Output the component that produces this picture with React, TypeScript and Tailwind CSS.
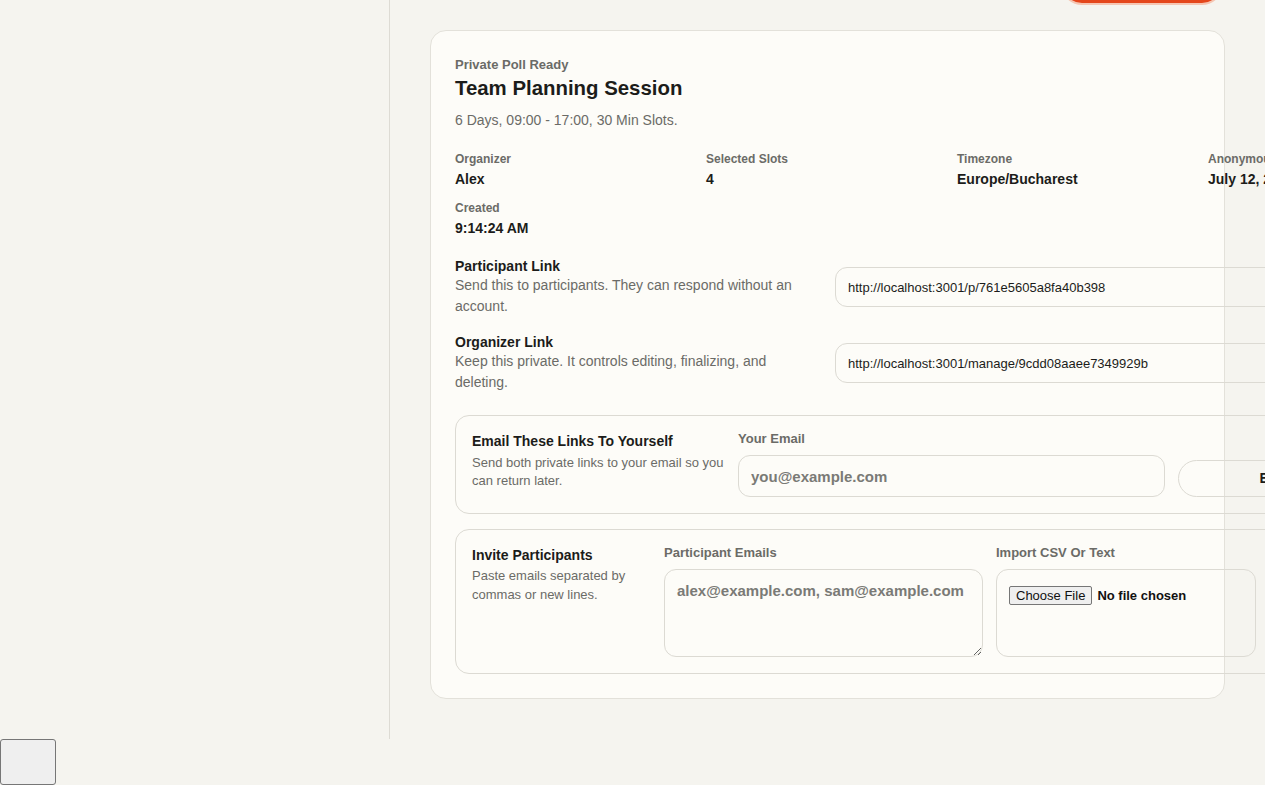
import React from "react";

const META = [
  { label: "Organizer", value: "Alex" },
  { label: "Selected Slots", value: "4" },
  { label: "Timezone", value: "Europe/Bucharest" },
  { label: "Anonymous Until", value: "July 12, 2025" },
  { label: "Created", value: "9:14:24 AM" },
];

const LINKS = [
  {
    title: "Participant Link",
    desc: "Send this to participants. They can respond without an account.",
    url: "http://localhost:3001/p/761e5605a8fa40b398",
  },
  {
    title: "Organizer Link",
    desc: "Keep this private. It controls editing, finalizing, and deleting.",
    url: "http://localhost:3001/manage/9cdd08aaee7349929b",
  },
];

export default function App() {
  return (
    <div
      className="w-full h-[785px] overflow-hidden bg-[#f5f4ef] text-[#1c1c1a]"
      style={{ fontFamily: '"Liberation Sans", Arial, sans-serif' }}
    >
      <div className="flex h-[739px]">
        {/* sidebar */}
        <aside className="w-[390px] shrink-0 border-r border-[#dddbd4]" />

        {/* main */}
        <main className="flex-1 pl-[40px]">
          <div className="w-[795px] flex justify-end pr-[2px]">
            <button className="w-[162px] h-[42px] -mt-[37px] rounded-full bg-[#e4461b] border-2 border-[#f5c6b3]" />
          </div>

          <section className="mt-[25px] w-[795px] h-[669px] rounded-2xl border border-[#e3e1da] bg-[#fdfcf8] px-6 pt-[26px]">
            <div className="w-[1004px]">
              <p className="text-[13px] leading-4 font-bold text-[#6b6b67]">Private Poll Ready</p>
              <h1 className="mt-[3px] text-[20.4px] leading-6 font-bold text-[#1c1c1a]">Team Planning Session</h1>
              <p className="mt-[12px] text-[14px] leading-4 text-[#6b6b67]">6 Days, 09:00 - 17:00, 30 Min Slots.</p>

              <div className="mt-[23px] grid grid-cols-[repeat(4,235px)] gap-x-4 gap-y-[11px]">
                {META.map((m) => (
                  <div key={m.label} className="whitespace-nowrap">
                    <div className="text-[12px] leading-4 font-bold text-[#6b6b67]">{m.label}</div>
                    <div className="mt-[2px] text-[14px] leading-5 font-bold text-[#1c1c1a]">{m.value}</div>
                  </div>
                ))}
              </div>

              <div className="mt-[19px] flex flex-col gap-4">
                {LINKS.map((l) => (
                  <div key={l.title} className="grid grid-cols-[352px_1fr] gap-7 items-center">
                    <div>
                      <div className="text-[14px] leading-[18px] font-bold text-[#1c1c1a]">{l.title}</div>
                      <div className="text-[14px] leading-[21px] text-[#6b6b67]">{l.desc}</div>
                    </div>
                    <input
                      readOnly
                      value={l.url}
                      className="h-[40px] w-full rounded-xl border border-[#dcdad3] px-3 text-[13px] text-[#1c1c1a] outline-none"
                    />
                  </div>
                ))}
              </div>

              {/* email yourself */}
              <div className="mt-[22px] rounded-[14px] border border-[#dcdad3] p-4 grid grid-cols-[253px_427px_1fr] gap-[13px] items-end">
                <div className="self-start">
                  <div className="text-[14px] leading-[18px] font-bold text-[#1c1c1a]">Email These Links To Yourself</div>
                  <div className="mt-[4px] text-[13px] leading-[18px] text-[#6b6b67]">
                    Send both private links to your email so you can return later.
                  </div>
                </div>
                <div>
                  <div className="text-[13px] leading-[14px] font-bold text-[#6b6b67]">Your Email</div>
                  <input
                    placeholder="you@example.com"
                    className="mt-[9px] h-[42px] w-full rounded-xl border border-[#dcdad3] px-3 text-[15px] font-bold text-[#1c1c1a] placeholder:text-[#7a7a76] outline-none"
                  />
                </div>
                <button className="h-[37px] w-full rounded-full border border-[#dcdad3] text-[14px] font-bold text-[#1c1c1a]">
                  Email Me Links
                </button>
              </div>

              {/* invite participants */}
              <div className="mt-[15px] rounded-[14px] border border-[#dcdad3] p-4 grid grid-cols-[179px_319px_260px_1fr] gap-[13px] items-end">
                <div className="self-start">
                  <div className="text-[14px] leading-[18px] font-bold text-[#1c1c1a]">Invite Participants</div>
                  <div className="mt-[2px] text-[13px] leading-[19px] text-[#6b6b67]">
                    Paste emails separated by commas or new lines.
                  </div>
                </div>
                <div>
                  <div className="text-[13px] leading-[14px] font-bold text-[#6b6b67]">Participant Emails</div>
                  <textarea
                    placeholder="alex@example.com, sam@example.com"
                    className="mt-[9px] block h-[88px] w-full rounded-xl border border-[#dcdad3] px-3 py-[12px] text-[15px] leading-[18px] font-bold text-[#1c1c1a] placeholder:text-[#7a7a76] outline-none"
                  />
                </div>
                <div>
                  <div className="text-[13px] leading-[14px] font-bold text-[#6b6b67]">Import CSV Or Text</div>
                  <div className="mt-[9px] h-[88px] rounded-xl border border-[#dcdad3] px-3 pt-[13px]">
                    <input
                      type="file"
                      className="text-[13px] leading-[17px] font-bold text-[#111] file:mr-[5px] file:rounded-[2px] file:border file:border-[#767676] file:bg-[#efefef] file:px-[6px] file:py-0 file:font-normal file:text-[13px] file:leading-[17px] file:text-[#111]"
                    />
                  </div>
                </div>
                <button className="h-[37px] w-full rounded-full border border-[#dcdad3] text-[14px] font-bold">
                  Send Invites
                </button>
              </div>
            </div>
          </section>
        </main>
      </div>

      <button className="block w-[56px] h-[46px] rounded-[3px] border border-[#767676] bg-[#efefef]" />
    </div>
  );
}
